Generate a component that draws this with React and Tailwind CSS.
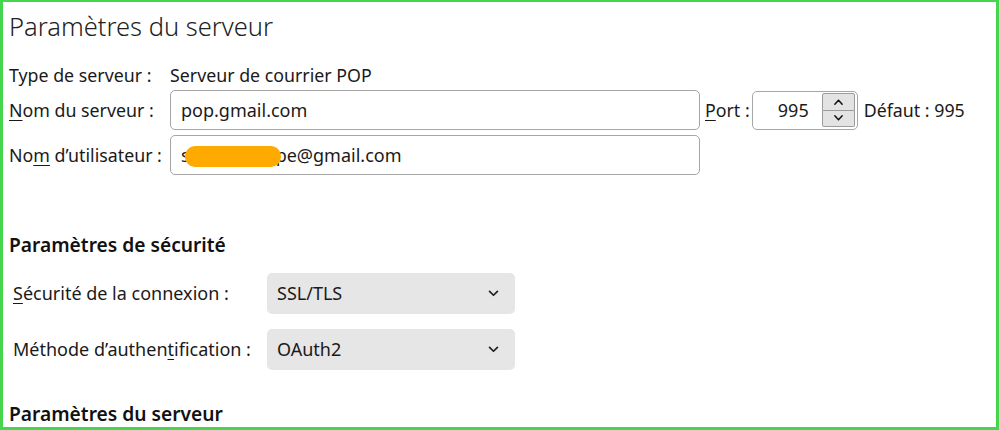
import React from "react";

const font = { fontFamily: '"Noto Sans", "Open Sans", sans-serif' };

function Chevron({ up, className }) {
  return (
    <svg viewBox="0 0 12 8" className={className} fill="none" stroke="currentColor" strokeWidth="1.6" strokeLinecap="round" strokeLinejoin="round">
      {up ? <path d="M2 6.5 L6 2 L10 6.5" /> : <path d="M2 1.5 L6 6 L10 1.5" />}
    </svg>
  );
}

function Select({ value }) {
  return (
    <div className="w-[248px] h-[41px] rounded-[5px] bg-[#e6e6e6] flex items-center justify-between pl-[10px] pr-[16px] text-[18px] text-[#1a1a1a]">
      <span>{value}</span>
      <svg viewBox="0 0 12 8" className="w-[11px] h-[7px] text-[#222]" fill="none" stroke="currentColor" strokeWidth="2" strokeLinecap="round" strokeLinejoin="round">
        <path d="M1.5 1.5 L6 6 L10.5 1.5" />
      </svg>
    </div>
  );
}

export default function App() {
  return (
    <div style={font} className="w-[999px] h-[430px] bg-white border-t-2 border-l-[3px] border-r-[3px] border-b-[3px] border-[#46d64d] overflow-hidden text-[#1a1a1a]">
      <div className="pl-[6px] pt-[6px]">
        <h1 className="text-[25.5px] font-light leading-[36px] text-[#222]">Paramètres du serveur</h1>

        <div className="mt-[19px] grid grid-cols-[161px_auto] items-center text-[17.8px]">
          <div className="h-[24px] leading-[24px]">Type de serveur :</div>
          <div className="h-[24px] leading-[24px]">Serveur de courrier POP</div>
        </div>

        <div className="mt-[3px] flex items-center text-[17.8px]">
          <div className="w-[161px]"><span className="underline underline-offset-[3px]">N</span>om du serveur :</div>
          <div className="w-[530px] h-[40px] rounded-[5px] border border-[#a6a6a6] flex items-center pl-[10px] text-[18px]">pop.gmail.com</div>
          <div className="ml-[5px]"><span className="underline underline-offset-[3px]">P</span>ort :</div>
          <div className="ml-[2px] w-[106px] h-[39px] rounded-[5px] border border-[#a6a6a6] flex items-center justify-end pr-[2px]">
            <span className="mr-[13px] text-[18px]">995</span>
            <div className="flex flex-col w-[33px] h-[34px]">
              <div className="flex-1 bg-[#e3e3e3] border border-[#9c9c9c] rounded-t-[2px] flex items-center justify-center">
                <Chevron up className="w-[11px] h-[8px] text-[#111]" />
              </div>
              <div className="flex-1 bg-[#e3e3e3] border border-t-0 border-[#9c9c9c] rounded-b-[2px] flex items-center justify-center">
                <Chevron className="w-[11px] h-[8px] text-[#111]" />
              </div>
            </div>
          </div>
          <div className="ml-[6px]">Défaut : 995</div>
        </div>

        <div className="mt-[5px] flex items-center text-[17.8px]">
          <div className="w-[161px]">No<span className="underline underline-offset-[3px]">m</span> d’utilisateur :</div>
          <div className="relative w-[530px] h-[40px] rounded-[5px] border border-[#a6a6a6] flex items-center pl-[10px] text-[18px]">
            <span>s</span>
            <span className="w-[86px]" />
            <span>pe@gmail.com</span>
            <div className="absolute left-[14px] top-[10px] w-[96px] h-[21px] rounded-[10px] bg-[#ffaa00]" />
          </div>
        </div>

        <h2 className="mt-[57px] text-[19.2px] font-semibold leading-[26px] text-[#111]">Paramètres de sécurité</h2>

        <div className="mt-[15px] pl-[4px] grid grid-cols-[254px_auto] gap-y-[15px] items-center text-[18px]">
          <div><span className="underline underline-offset-[3px]">S</span>écurité de la connexion :</div>
          <Select value="SSL/TLS" />
          <div>Méthode d’authen<span className="underline underline-offset-[3px]">t</span>ification :</div>
          <Select value="OAuth2" />
        </div>

        <h2 className="mt-[31px] text-[19.2px] font-semibold leading-[26px] text-[#111]">Paramètres du serveur</h2>
      </div>
    </div>
  );
}
